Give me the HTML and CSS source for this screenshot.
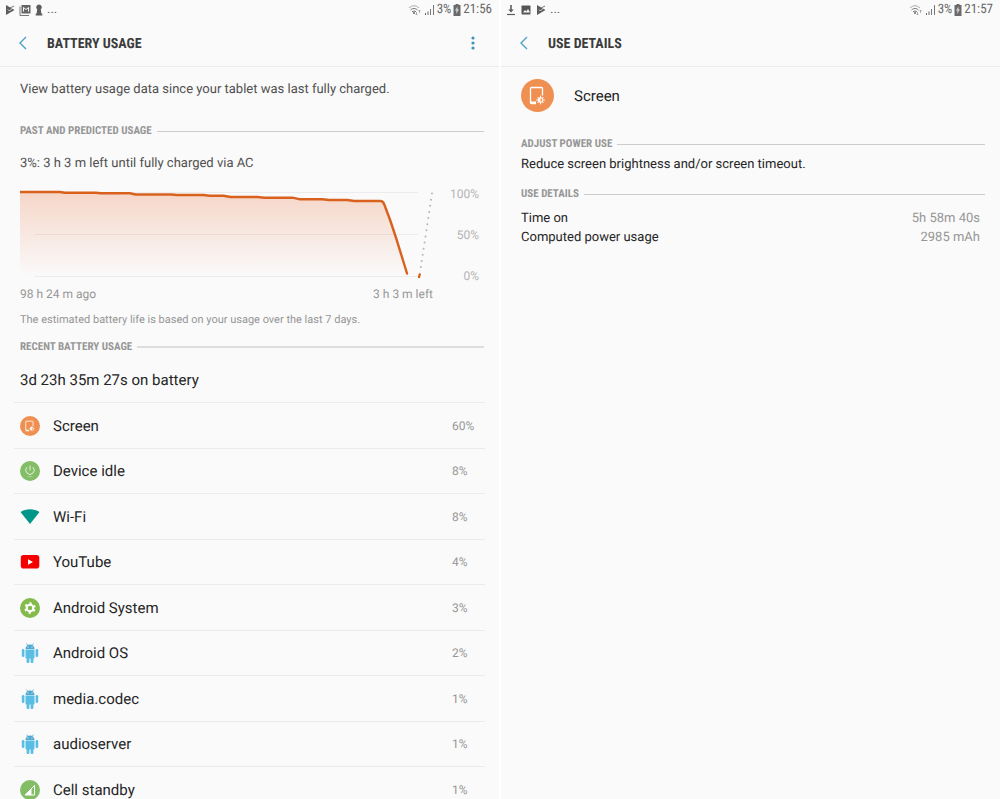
FILE: index.html
```html
<!DOCTYPE html>
<html lang="en">
<head>
  <meta charset="UTF-8">
  <meta name="viewport" content="width=device-width, initial-scale=1.0">
  <title>Battery usage</title>
  <link rel="stylesheet" href="styles.css">
</head>
<body>
  <!--SHARED ICONS-->
  <svg class="defs" width="0" height="0" aria-hidden="true">
    <symbol id="play" viewBox="0 0 10 12">
      <path d="M1 1v10l8.500-5z" fill="#5c5c5c"/>
      <path d="M3 5.500l1.500 1.500L8.500 3" fill="none" stroke="#fafafa" stroke-width=".8"/>
      <path d="M5 4l4-2" stroke="#777" stroke-width="1"/>
    </symbol>
    <symbol id="wifi" viewBox="0 0 14 12">
      <g fill="none" stroke="#777" stroke-width="1">
        <path d="M1 4c3-3 7-3 10 0" stroke="#aaa"/>
        <path d="M2.500 6c2-2 5-2 7 0"/>
        <path d="M4 7.800c1.200-1 2.800-1 4 0"/>
      </g>
      <circle cx="6" cy="9" r="1" fill="#666"/>
      <path d="M8.500 8v3M7.500 10l1 1 1-1M11.500 9V6M10.500 7l1-1 1 1" fill="none" stroke="#999" stroke-width=".8"/>
    </symbol>
    <symbol id="signal" viewBox="0 0 11 12">
      <path d="M1 9h1v2H1zM3.500 7.500h1V11h-1z" fill="#666"/>
      <path d="M6 5h1v6H6zM9 1h1v10H9z" fill="#777"/>
    </symbol>
    <symbol id="battery" viewBox="0 0 8 12">
      <path d="M2.500 0h3v1H7.500v11h-7V1h2z" fill="#6a6a6a"/>
      <path d="M4.500 2.500L2 6.500h1.500L3 10l3-4.500H4.500z" fill="#d4d4d4"/>
    </symbol>
    <symbol id="back" viewBox="0 0 10 14">
      <path d="M8 1L2 7l6 6" fill="none" stroke="#4ba3c7" stroke-width="1.400"/>
    </symbol>
    <symbol id="screen" viewBox="0 0 33 33">
      <circle cx="16.500" cy="16.500" r="16.500" fill="#ef9052"/>
      <path d="M21.500 16.500V9.500a1 1 0 0 0-1-1h-10a1 1 0 0 0-1 1v14a1 1 0 0 0 1 1H15" fill="none" stroke="#fff" stroke-width="1.300"/>
      <path d="M9.500 22.500H15v2H10z" fill="#fff"/>
      <path d="M19.500 16.700v8.600M15.200 21h8.600M16.500 18l6 6M22.500 18l-6 6" stroke="#fff" stroke-width="1"/>
      <circle cx="19.500" cy="21" r="2.700" fill="#fff"/>
      <path d="M19.500 19.200a1.800 1.800 0 0 1 0 3.600z" fill="#ef9052"/>
    </symbol>
    <symbol id="android" viewBox="0 0 20 20">
      <g fill="#59bde4">
        <path d="M5.500 6a4.500 4.500 0 0 1 9 0z" fill="#4fa9d0"/>
        <path d="M6.500 .500L8 2.500M13.500 .500L12 2.500" stroke="#4fa9d0" stroke-width=".8"/>
        <path d="M5.500 6.600h9v8a1 1 0 0 1-1 1h-7a1 1 0 0 1-1-1z"/>
        <rect x="1.800" y="6" width="2.600" height="8" rx="1.300"/>
        <rect x="15.600" y="6" width="2.600" height="8" rx="1.300"/>
        <rect x="6.600" y="14" width="2.800" height="6" rx="1"/>
        <rect x="10.600" y="14" width="2.800" height="6" rx="1"/>
      </g>
      <circle cx="8" cy="4" r=".6" fill="#fff"/>
      <circle cx="12" cy="4" r=".6" fill="#fff"/>
    </symbol>
  </svg>

  <main class="screens">
    <!--BATTERY USAGE-->
    <section class="screen">
      <div class="status-bar">
        <div class="status-group notifications">
          <svg width="10" height="12"><use href="#play"/></svg>
          <svg width="12" height="12" viewBox="0 0 12 12">
            <path d="M1 2.500v9h9" fill="none" stroke="#777" stroke-width="1"/>
            <rect x="2.500" y="1" width="9" height="8.500" fill="#666"/>
            <path d="M4.500 7.500V3.500L7 5.500l2.500-2v4" fill="none" stroke="#fafafa" stroke-width="1"/>
          </svg>
          <svg width="8" height="12" viewBox="0 0 8 12">
            <path d="M4 .500a2.800 2.800 0 0 1 2.200 4.500H5.800l.5 4.500h1v2H.700v-2h1l.5-4.500H1.800A2.800 2.800 0 0 1 4 .500z" fill="#5c5c5c"/>
          </svg>
          <span>...</span>
        </div>
        <div class="status-group">
          <svg width="14" height="12"><use href="#wifi"/></svg>
          <svg width="11" height="12"><use href="#signal"/></svg>
          <span>3%</span>
          <svg width="8" height="12"><use href="#battery"/></svg>
          <span>21:56</span>
        </div>
      </div>
      <header class="app-bar">
        <button class="icon-button" type="button" aria-label="Back">
          <svg width="10" height="14"><use href="#back"/></svg>
        </button>
        <h1>BATTERY USAGE</h1>
        <button class="icon-button more" type="button" aria-label="More options">
          <svg width="4" height="14" viewBox="0 0 4 14" fill="#3f93b8">
            <circle cx="2" cy="2" r="1.600"/><circle cx="2" cy="7" r="1.600"/><circle cx="2" cy="12" r="1.600"/>
          </svg>
        </button>
      </header>

      <div class="content">
        <p class="intro">View battery usage data since your tablet was last fully charged.</p>

        <h2 class="section-title after-intro">PAST AND PREDICTED USAGE</h2>
        <p class="charge">3%: 3 h 3 m left until fully charged via AC</p>
        <div class="chart">
          <svg class="plot" viewBox="0 0 414 98" preserveAspectRatio="none" role="img" aria-label="Battery level over time">
            <defs>
              <linearGradient id="fade" x1="0" y1="0" x2="0" y2="1">
                <stop offset="0" stop-color="#f6d6c8"/>
                <stop offset="1" stop-color="#fafafa"/>
              </linearGradient>
            </defs>
            <path d="M0 6H40L78 7 112 8.500 150 9 185 10 210 11 235 11 274 12 280 13 305 13.500 330 14 362 15.500 366 18 388 88 0 90z" fill="url(#fade)"/>
            <path d="M14 6.500H399M14 48.500H399M14 90.500H399" stroke="#000" stroke-opacity=".06"/>
            <path d="M0 6H40L45 6.700H76L81 7.300H110L116 8.500H152L157 9H184L190 9.700H204L211 11H238L245 11.700H273L280 13.200H303L310 14H328L335 15H361Q364 15 365 18L371 34 377 52 388 87.500" fill="none" stroke="#d9611e" stroke-width="2.400" stroke-linecap="round" stroke-linejoin="round"/>
            <path d="M413 7.500L401.500 83" stroke="#adb8c1" stroke-width="2" stroke-linecap="round" stroke-dasharray="0 6.200"/>
            <path d="M400.700 88.500L400 91" stroke="#d9611e" stroke-width="2.400" stroke-linecap="round"/>
          </svg>
          <div class="levels">
            <span>100%</span>
            <span>50%</span>
            <span>0%</span>
          </div>
          <div class="times">
            <span>98 h 24 m ago</span>
            <span>3 h 3 m left</span>
          </div>
        </div>
        <p class="note">The estimated battery life is based on your usage over the last 7 days.</p>

        <h2 class="section-title thick">RECENT BATTERY USAGE</h2>
        <p class="summary">3d 23h 35m 27s on battery</p>
      </div>

      <ul class="usage-list">
        <li>
          <a href="#details">
            <svg width="20" height="20"><use href="#screen"/></svg>
            <span class="name">Screen</span><span class="percent">60%</span>
          </a>
        </li>
        <li>
          <a href="#">
            <svg width="20" height="20" viewBox="0 0 20 20">
              <circle cx="10" cy="10" r="10" fill="#83bd66"/>
              <path d="M7 6.200a4.200 4.200 0 1 0 6 0M10 4.500v5" fill="none" stroke="#e6f2df" stroke-width="1"/>
              <path d="M7.500 15.700h5" stroke="#b5d8a3" stroke-width=".8"/>
            </svg>
            <span class="name">Device idle</span><span class="percent">8%</span>
          </a>
        </li>
        <li>
          <a href="#">
            <svg width="20" height="20" viewBox="0 0 20 20">
              <path d="M.500 5C6 1.300 14 1.300 19.500 5L10 17z" fill="#009688"/>
            </svg>
            <span class="name">Wi-Fi</span><span class="percent">8%</span>
          </a>
        </li>
        <li>
          <a href="#">
            <svg width="20" height="20" viewBox="0 0 20 20">
              <rect x=".800" y="3" width="18.500" height="13.500" rx="2.800" fill="#f40000"/>
              <path d="M8 7.200v5.600l5-2.800z" fill="#fff"/>
            </svg>
            <span class="name">YouTube</span><span class="percent">4%</span>
          </a>
        </li>
        <li>
          <a href="#">
            <svg width="20" height="20" viewBox="0 0 20 20">
              <circle cx="10" cy="10" r="10" fill="#84bb4c"/>
              <circle cx="10" cy="10" r="4.800" fill="none" stroke="#fff" stroke-width="1.800" stroke-dasharray="2.300 2.727" stroke-dashoffset="-1.360"/>
              <circle cx="10" cy="10" r="3.300" fill="none" stroke="#fff" stroke-width="2"/>
            </svg>
            <span class="name">Android System</span><span class="percent">3%</span>
          </a>
        </li>
        <li>
          <a href="#">
            <svg width="20" height="20"><use href="#android"/></svg>
            <span class="name">Android OS</span><span class="percent">2%</span>
          </a>
        </li>
        <li>
          <a href="#">
            <svg width="20" height="20"><use href="#android"/></svg>
            <span class="name">media.codec</span><span class="percent">1%</span>
          </a>
        </li>
        <li>
          <a href="#">
            <svg width="20" height="20"><use href="#android"/></svg>
            <span class="name">audioserver</span><span class="percent">1%</span>
          </a>
        </li>
        <li>
          <a href="#">
            <svg width="20" height="20" viewBox="0 0 20 20">
              <circle cx="10" cy="10" r="10" fill="#83bd66"/>
              <path d="M14.500 5.500v9.500H5z" fill="none" stroke="#fff" stroke-width="1"/>
              <path d="M11.500 8.500V15H5z" fill="#fff"/>
            </svg>
            <span class="name">Cell standby</span><span class="percent">1%</span>
          </a>
        </li>
      </ul>
    </section>

    <!--USE DETAILS-->
    <section class="screen" id="details">
      <div class="status-bar">
        <div class="status-group notifications">
          <svg width="10" height="12" viewBox="0 0 10 12">
            <path d="M4.200 1h1.600v4.500h2L5 8.500 2.200 5.500h2z" fill="#5c5c5c"/>
            <path d="M1 10.500h8" stroke="#5c5c5c" stroke-width="1.200"/>
          </svg>
          <svg width="12" height="12" viewBox="0 0 12 12">
            <rect x="1.500" y="1.500" width="9" height="9" rx=".800" fill="#555"/>
            <path d="M3 8.500l2-2.500 1.300 1.500L8 5l2 3.500z" fill="#fafafa"/>
          </svg>
          <svg width="10" height="12"><use href="#play"/></svg>
          <span>...</span>
        </div>
        <div class="status-group">
          <svg width="14" height="12"><use href="#wifi"/></svg>
          <svg width="11" height="12"><use href="#signal"/></svg>
          <span>3%</span>
          <svg width="8" height="12"><use href="#battery"/></svg>
          <span>21:57</span>
        </div>
      </div>
      <header class="app-bar">
        <button class="icon-button" type="button" aria-label="Back">
          <svg width="10" height="14"><use href="#back"/></svg>
        </button>
        <h1>USE DETAILS</h1>
      </header>

      <div class="content">
        <div class="app-info">
          <svg width="33" height="33"><use href="#screen"/></svg>
          <span>Screen</span>
        </div>
        <h2 class="section-title after-intro">ADJUST POWER USE</h2>
        <p class="advice">Reduce screen brightness and/or screen timeout.</p>
        <h2 class="section-title">USE DETAILS</h2>
        <table class="details">
          <tr>
            <th scope="row">Time on</th>
            <td>5h 58m 40s</td>
          </tr>
          <tr>
            <th scope="row">Computed power usage</th>
            <td>2985 mAh</td>
          </tr>
        </table>
      </div>
    </section>
  </main>
</body>
</html>
```
FILE: styles.css
```css
body {
  margin: 0;
  background: #ffffff;
  color: #252525;
  font-family: Roboto, "Liberation Sans", sans-serif;
  font-size: 13px;
  line-height: 20px;
  text-rendering: geometricPrecision;
}
h1, h2, p, ul {
  margin: 0;
  padding: 0;
}
svg {
  display: block;
  flex: none;
}
.defs {
  position: absolute;
}
.screens {
  display: grid;
  grid-template-columns: 1fr 1fr;
  gap: 2px;
}
.screen {
  height: 100vh;
  overflow: hidden;
  background: #fafafa;
}

/* status bar */
.status-bar {
  display: flex;
  justify-content: space-between;
  height: 20px;
  padding: 0 7px 0 5px;
  color: #666666;
  font-family: "Roboto Condensed", Roboto, sans-serif;
  font-size: 13px;
  line-height: 22px;
}
.status-group {
  display: flex;
  align-items: center;
  gap: 2px;
}
.notifications {
  gap: 4px;
}

/* title bar */
.app-bar {
  display: flex;
  align-items: center;
  height: 46px;
  padding: 0 16px;
  border-bottom: 1px solid #ebebeb;
}
.app-bar h1 {
  flex: 1;
  margin-left: 17px;
  padding-top: 2px;
  color: #3c3c3c;
  font-family: "Roboto Condensed", Roboto, sans-serif;
  font-size: 14px;
  font-weight: bold;
}
.icon-button {
  display: flex;
  justify-content: center;
  width: 14px;
  padding: 5px 0;
  border: none;
  background: none;
  cursor: pointer;
}
.more {
  width: 20px;
}

.content {
  padding: 12px 20px 0;
}
.section-title {
  display: flex;
  align-items: center;
  gap: 5px;
  margin: 11px -5px 0 0;
  color: #969696;
  font-family: "Roboto Condensed", Roboto, sans-serif;
  font-size: 11px;
  font-weight: bold;
  line-height: 16px;
}
.section-title::after {
  content: "";
  flex: 1;
  height: 1px;
  background: #cccccc;
}
.thick::after {
  height: 2px;
  background: #dedede;
}
.after-intro {
  margin-top: 22px;
}
.intro, .charge {
  color: #505050;
  line-height: 22px;
}
.charge {
  margin-top: 14px;
}

/* battery chart */
.chart {
  display: grid;
  grid-template-columns: 1fr 46px;
  row-gap: 2px;
  margin-top: 11px;
  color: #969696;
  font-size: 12px;
  line-height: 16px;
}
.plot {
  width: 100%;
  height: 98px;
}
.levels {
  display: flex;
  flex-direction: column;
  justify-content: space-between;
  color: #b4b4b4;
  text-align: right;
}
.times {
  display: flex;
  justify-content: space-between;
}
.note {
  margin-top: 10px;
  color: #969696;
  font-size: 11px;
  line-height: 16px;
}
.summary {
  margin: 15px 0 12px;
  font-size: 15px;
}

/* usage by app */
.usage-list {
  margin: 0 14px;
  list-style: none;
}
.usage-list li {
  height: 45px;
  border-top: 1px solid #ebebeb;
}
.usage-list li:nth-child(even) {
  height: 44px;
}
.usage-list a {
  display: flex;
  align-items: center;
  height: 100%;
  padding-left: 6px;
  color: inherit;
  text-decoration: none;
}
.name {
  flex: 1;
  margin-left: 13px;
  font-size: 15px;
}
.percent {
  width: 33px;
  color: #969696;
  font-size: 12px;
}

/* use details */
.app-info {
  display: flex;
  align-items: center;
  gap: 20px;
  padding-bottom: 2px;
  font-size: 15px;
}
.advice {
  margin-top: 3px;
}
.details {
  width: 100%;
  margin-top: 7px;
  border-collapse: collapse;
  line-height: 19px;
}
.details th {
  padding: 0;
  font-weight: normal;
  text-align: left;
}
.details td {
  padding: 0;
  color: #969696;
  text-align: right;
}
```
